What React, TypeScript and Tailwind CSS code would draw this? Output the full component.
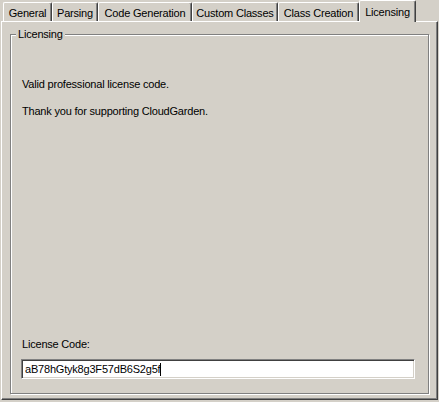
import React from "react";

const tabs = [
  { label: "General", w: 49 },
  { label: "Parsing", w: 46 },
  { label: "Code Generation", w: 94 },
  { label: "Custom Classes", w: 86 },
  { label: "Class Creation", w: 81 },
];

export default function App() {
  return (
    <div
      className="w-[439px] h-[402px] bg-[#d4d0c8] text-black text-[11px] leading-[13px] tracking-[-0.2px] overflow-hidden"
      style={{ fontFamily: '"Liberation Sans", Arial, sans-serif' }}
    >
      {/* tab strip */}
      <div className="relative z-10 flex items-end h-[21px] pl-[3px]">
        {tabs.map((t) => (
          <div
            key={t.label}
            style={{ width: t.w }}
            className="h-[19px] flex items-center justify-center border-l border-t border-white border-r border-r-[#404040] rounded-tl-[2px] rounded-tr-[2px] shadow-[inset_-1px_0_0_#808080] pt-[2px] whitespace-nowrap"
          >
            {t.label}
          </div>
        ))}
        <div className="w-[57px] h-[22px] -mb-px flex items-start justify-center pt-[5px] bg-[#d4d0c8] border-l border-t border-white border-r border-r-[#404040] rounded-tl-[2px] rounded-tr-[2px] shadow-[inset_-1px_0_0_#808080] whitespace-nowrap">
          Licensing
        </div>
      </div>

      {/* panel */}
      <div className="ml-px w-[437px] h-[379px] border-l border-t border-white border-r border-b border-r-[#404040] border-b-[#404040] shadow-[inset_-1px_-1px_0_#808080] pl-[8px] pt-[12px]">
        <div className="relative w-[419px] h-[360px] border border-[#808080] shadow-[inset_1px_1px_0_#ffffff,1px_1px_0_#ffffff] flex flex-col px-[10px] pt-[43px] pb-[14px]">
          <div className="absolute left-[5px] top-[-7px] bg-[#d4d0c8] px-[2px]">
            Licensing
          </div>
          <div className="pl-px">Valid professional license code.</div>
          <div className="pl-px mt-[14px]">Thank you for supporting CloudGarden.</div>
          <div className="flex-1" />
          <div className="pl-px">License Code:</div>
          <div className="mt-[8px] w-[394px] h-[20px] bg-white border border-t-[#808080] border-l-[#808080] border-b-white border-r-white shadow-[inset_1px_1px_0_#404040,inset_-1px_-1px_0_#d4d0c8] flex items-center pl-[3px]">
            <span>aB78hGtyk8g3F57dB6S2g5f</span>
            <span className="inline-block w-px h-[13px] bg-black" />
          </div>
        </div>
      </div>
    </div>
  );
}
